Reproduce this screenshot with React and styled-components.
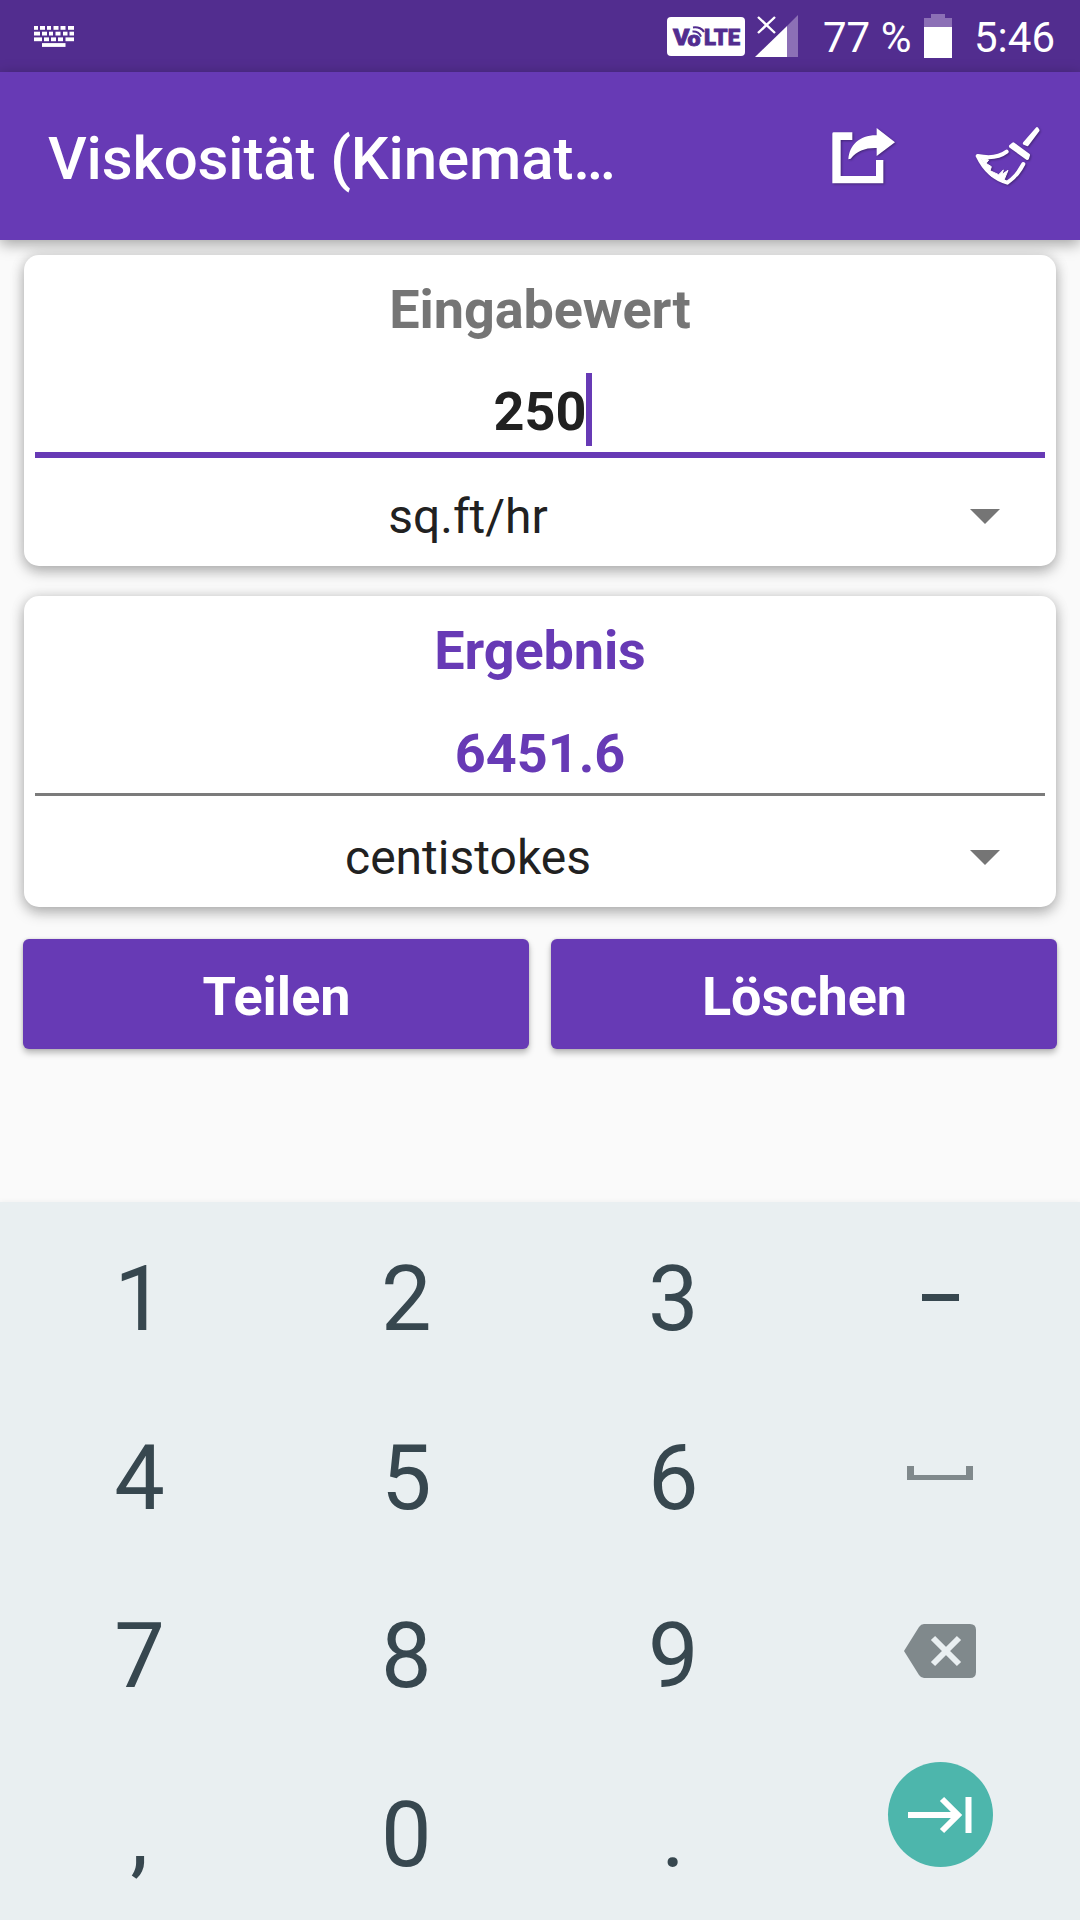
import { useState } from 'react';
import styled, { createGlobalStyle } from 'styled-components';

const GlobalStyle = createGlobalStyle`
    * {
        box-sizing: border-box;
    }
    body {
        margin: 0;
        background: #fafafa;
        font-family: Roboto, sans-serif;
    }
`

const Screen = styled.div`
    width: 1080px;
    height: 1920px;
    display: flex;
    flex-direction: column;
    overflow: hidden;
    background: #fafafa;
`

const StatusBar = styled.header`
    height: 72px;
    flex-shrink: 0;
    display: flex;
    align-items: center;
    padding: 0 26px 0 34px;
    background: #522d8f;
    color: #fff;
    font-size: 42px;
    line-height: 70px;
`

const StatusIcon = styled.svg`
    display: block;
    flex-shrink: 0;
    margin-left: ${props => props.$left || 0}px;
`

const StatusText = styled.span`
    width: ${props => props.$width}px;
    margin-left: ${props => props.$left}px;
    padding-top: 4px;
    white-space: nowrap;
`

const Spacer = styled.div`
    flex: 1;
`

const Toolbar = styled.div`
    height: 168px;
    flex-shrink: 0;
    display: flex;
    align-items: center;
    padding-left: 48px;
    background: #673ab5;
    box-shadow: 0 4px 14px rgba(0, 0, 0, 0.36);
`

const Title = styled.h1`
    flex: 1;
    margin: 0;
    padding-top: 6px;
    color: #fff;
    font-size: 60px;
    font-weight: 500;
    line-height: 70px;
    letter-spacing: -0.13px;
    white-space: nowrap;
`

const ToolbarButton = styled.button`
    width: 144px;
    height: 144px;
    display: flex;
    align-items: center;
    justify-content: center;
    padding: 0;
    border: none;
    background: none;
    svg {
        filter: drop-shadow(1px 1px 1px rgba(0, 0, 0, 0.35));
    }
`

const Content = styled.main`
    flex: 1;
    display: flex;
    flex-direction: column;
    gap: 30px;
    padding: 15px 24px 0;
`

const Card = styled.section`
    height: 311px;
    display: flex;
    flex-direction: column;
    padding: 0 11px;
    border-radius: 15px;
    background: #fff;
    box-shadow: 0 6px 14px rgba(0, 0, 0, 0.25), 0 0 14px rgba(0, 0, 0, 0.14);
`

const CardTitle = styled.h2`
    height: 106px;
    margin: 0;
    color: ${props => props.$color};
    font-size: 54px;
    font-weight: 700;
    line-height: 110px;
    letter-spacing: -0.1px;
    text-align: center;
`

const ValueField = styled.div`
    height: ${props => (props.$focused ? 97 : 94)}px;
    display: flex;
    align-items: center;
    justify-content: center;
    padding-top: ${props => (props.$focused ? 10 : 11)}px;
    border-bottom: ${props => (props.$focused ? '6px solid #673ab5' : '3px solid #7b7b7b')};
    color: ${props => props.$color};
    font-size: 54px;
    font-weight: 700;
`

const Caret = styled.span`
    width: 6px;
    height: 73px;
    margin: -5px -6px 0 0;
    background: #673ab5;
`

const UnitSelect = styled.div`
    flex: 1;
    display: flex;
    align-items: center;
    padding: ${props => props.$top}px 45px 0 0;
    color: #212121;
    font-size: 48px;
`

const UnitName = styled.span`
    width: 866px;
    text-align: center;
`

const SelectArrow = styled.span`
    width: 0;
    height: 0;
    margin-left: auto;
    border: 15px solid transparent;
    border-top-color: #757575;
    border-bottom: none;
`

const Actions = styled.div`
    display: grid;
    grid-template-columns: 1fr 1fr;
    gap: 22px;
    margin: 2px -1px 0;
`

const ActionButton = styled.button`
    height: 110px;
    padding: 4px 0 0 1px;
    border: none;
    border-radius: 6px;
    background: #673ab5;
    box-shadow: 0 4px 6px rgba(0, 0, 0, 0.26), 0 0 3px rgba(0, 0, 0, 0.14);
    color: #fff;
    font-family: inherit;
    font-size: 54px;
    font-weight: 700;
`

const Keyboard = styled.div`
    height: 718px;
    flex-shrink: 0;
    display: grid;
    grid-template-columns: repeat(4, 266.9px);
    grid-auto-rows: 178.8px;
    padding: 6px;
    background: #e9eff1;
    box-shadow: 0 0 6px rgba(0, 0, 0, 0.05);
`

const Key = styled.button`
    display: flex;
    align-items: center;
    justify-content: center;
    padding: ${props => props.$top ?? 5}px 0 ${props => props.$bottom || 0}px;
    border: none;
    background: none;
    color: #37474f;
    font-family: inherit;
    font-size: 90px;
    line-height: 1;
`

const EnterKey = styled.span`
    width: 105px;
    height: 105px;
    display: flex;
    align-items: center;
    justify-content: center;
    margin-bottom: 38px;
    border-radius: 50%;
    background: #4db6ac;
`

const MinusMark = styled.span`
    width: 37px;
    height: 7px;
    background: #37474f;
`

const SpaceMark = styled.span`
    width: 66px;
    height: 14px;
    border: solid #80898c;
    border-width: 0 7px 5px;
`

// rows of keys: [x, width]
const keyboardRows = [
    [[0, 4], [6, 5], [13, 4], [19.5, 5], [26.5, 5], [34, 6]],
    [[0, 6], [8, 5], [15, 4], [21.5, 5], [29, 4.5], [35.5, 4.5]],
    [[0, 8], [10, 5], [17, 5], [24, 5], [31.5, 8.5]],
    [[8, 23.5]],
];

const KeyboardIcon = () => (
    <StatusIcon width="40" height="21" viewBox="0 0 40 21" fill="#fff">
        {keyboardRows.map((row, i) => row.map(([x, w]) => (
            <rect key={`${i}-${x}`} x={x} y={i * 5.7} width={w} height="3.8" />
        )))}
    </StatusIcon>
)

const VolteIcon = () => (
    <StatusIcon width="78" height="39" viewBox="0 0 78 39">
        <rect width="78" height="39" rx="4" fill="#fff" />
        <g fill="#522d8f" stroke="#522d8f" strokeWidth="0.8" fontFamily="Roboto, sans-serif" fontWeight="900" fontSize="22">
            <text x="6" y="28.3" textLength="16.5" lengthAdjust="spacingAndGlyphs">V</text>
            <text x="37" y="28.3" textLength="36" lengthAdjust="spacingAndGlyphs">LTE</text>
            <text x="20.5" y="29" fontSize="20" textLength="13" lengthAdjust="spacingAndGlyphs">o</text>
        </g>
        <g fill="none" stroke="#522d8f" strokeWidth="2">
            <path d="M25.5 14.6C29.5 14.1 33 16.4 34 19.6" />
            <path d="M26 10.4C31.4 9.6 35.6 12 37 15" />
        </g>
    </StatusIcon>
)

const SignalIcon = () => (
    <StatusIcon $left={10} width="43" height="43" viewBox="0 0 43 43">
        <path d="M43 0V42H32V11Z" fill="#8c70b6" />
        <path d="M32 11V42H0Z" fill="#fff" />
        <path d="M3 2L20 18M20 2L3 18" stroke="#522d8f" strokeWidth="5" />
        <path d="M3 2L20 18M20 2L3 18" stroke="#fff" strokeWidth="2.4" />
    </StatusIcon>
)

const BatteryIcon = () => (
    <StatusIcon $left={14} width="28" height="44" viewBox="0 0 28 44">
        <path d="M7 0H21V4H28V13H0V4H7Z" fill="#8c70b6" />
        <rect y="13" width="28" height="31" fill="#fff" />
    </StatusIcon>
)

const ShareIcon = () => (
    <svg width="72" height="72" viewBox="0 0 216 216" fill="#fff">
        <path d="M17 37H73V60H38V168H144V120H166V190H13V41Q13 37 17 37Z" />
        <path d="M146 24L201 67L146 108V84C112 83 88 92 68 116L61 118C64 75 95 45 146 46Z" />
    </svg>
)

const BroomIcon = () => (
    <svg width="72" height="72" viewBox="0 0 216 216" fill="#fff" stroke="#fff" strokeLinejoin="round" strokeLinecap="round">
        <path d="M195 26L198 31L166 74L157 70Z" strokeWidth="9" />
        <path d="M124 72L116 79L166 115L169 105Z" strokeWidth="10" />
        <path d="M104 95C82 112 52 115 17 108C36 148 64 176 106 188C126 174 142 156 154 132" fill="none" strokeWidth="12" />
        <path d="M24 112L50 120L42 130L58 140L54 152L80 164L94 150L90 163L108 151L96 180L58 168Z" strokeWidth="3" />
    </svg>
)

const BackspaceIcon = () => (
    <svg width="72" height="54" viewBox="0 0 72 54">
        <path d="M20 0H66Q72 0 72 6V48Q72 54 66 54H20Q17 54 15 51L0 27L15 3Q17 0 20 0Z" fill="#80898c" />
        <path d="M29 14L55 40M55 14L29 40" stroke="#e9eff1" strokeWidth="6" />
    </svg>
)

const NextIcon = () => (
    <svg width="64" height="38" viewBox="0 0 64 38" fill="none" stroke="#fff" strokeWidth="6">
        <path d="M0 19H51M34 3L50 19L34 35M60.5 1V37" />
    </svg>
)

const App = () => {
    const [value] = useState('250');

    return (
        <>
            <GlobalStyle />
            <Screen>
                <StatusBar>
                    <KeyboardIcon />
                    <Spacer />
                    <VolteIcon />
                    <SignalIcon />
                    <StatusText $left={25} $width={87}>77 %</StatusText>
                    <BatteryIcon />
                    <StatusText $left={22} $width={80}>5:46</StatusText>
                </StatusBar>
                <Toolbar>
                    <Title>Viskosität (Kinemat…</Title>
                    <ToolbarButton><ShareIcon /></ToolbarButton>
                    <ToolbarButton><BroomIcon /></ToolbarButton>
                </Toolbar>
                <Content>
                    <Card>
                        <CardTitle $color="#757575">Eingabewert</CardTitle>
                        <ValueField $focused $color="#212121">{value}<Caret /></ValueField>
                        <UnitSelect $top={9}>
                            <UnitName>sq.ft/hr</UnitName>
                            <SelectArrow />
                        </UnitSelect>
                    </Card>
                    <Card>
                        <CardTitle $color="#673ab5">Ergebnis</CardTitle>
                        <ValueField $color="#673ab5">6451.6</ValueField>
                        <UnitSelect $top={12}>
                            <UnitName>centistokes</UnitName>
                            <SelectArrow />
                        </UnitSelect>
                    </Card>
                    <Actions>
                        <ActionButton>Teilen</ActionButton>
                        <ActionButton>Löschen</ActionButton>
                    </Actions>
                </Content>
                <Keyboard>
                    <Key>1</Key>
                    <Key>2</Key>
                    <Key>3</Key>
                    <Key $top={1}><MinusMark /></Key>
                    <Key>4</Key>
                    <Key>5</Key>
                    <Key>6</Key>
                    <Key $top={0} $bottom={6}><SpaceMark /></Key>
                    <Key>7</Key>
                    <Key>8</Key>
                    <Key>9</Key>
                    <Key $top={0} $bottom={7}><BackspaceIcon /></Key>
                    <Key>,</Key>
                    <Key>0</Key>
                    <Key>.</Key>
                    <Key $top={0}><EnterKey><NextIcon /></EnterKey></Key>
                </Keyboard>
            </Screen>
        </>
    )
}

export default App;
